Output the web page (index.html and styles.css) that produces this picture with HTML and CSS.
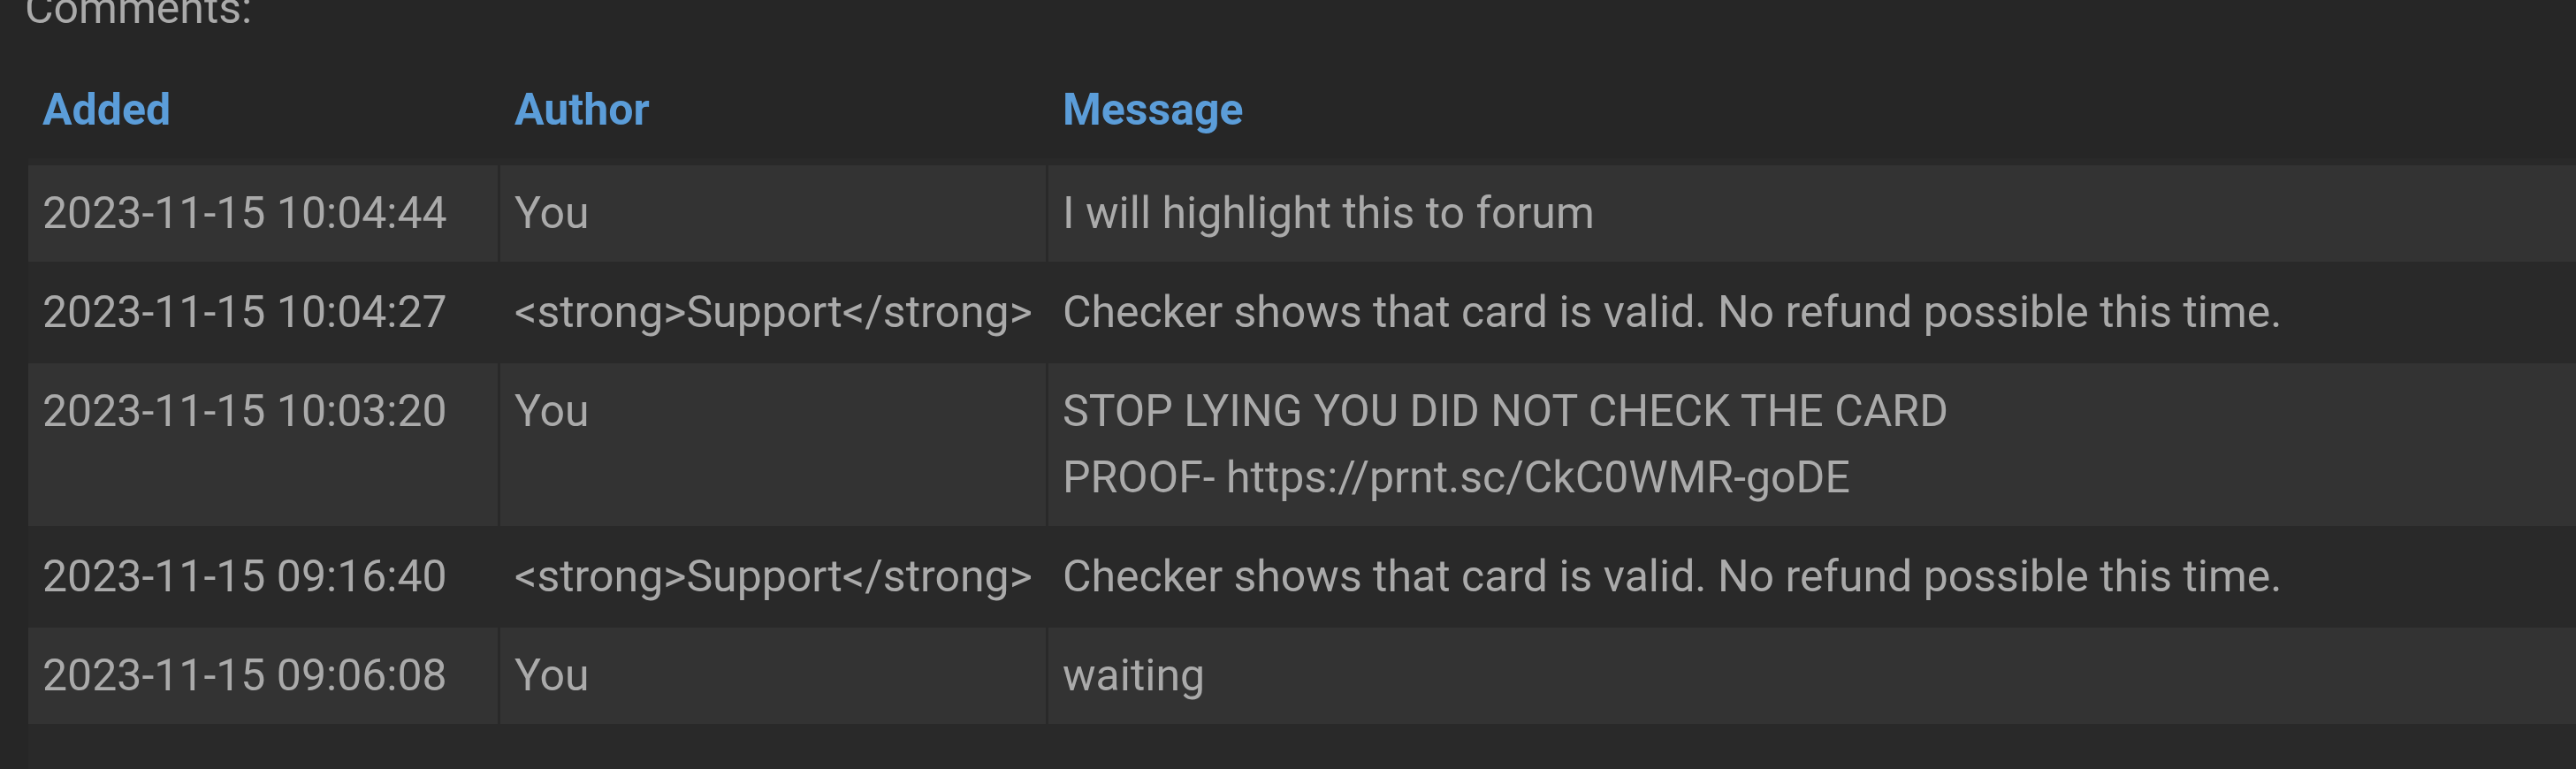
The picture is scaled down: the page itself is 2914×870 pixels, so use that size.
FILE: index.html
```html
<!DOCTYPE html>
<html>
<head>
<meta charset="utf-8">
<link rel="stylesheet" href="styles.css">
</head>
<body>
<div class="page">
  <div class="title">Comments:</div>
  <div class="comments">
    <div class="grid head">
      <div class="cell">Added</div>
      <div class="cell">Author</div>
      <div class="cell">Message</div>
    </div>
    <div class="grid body">
      <div class="row odd">
        <div class="cell">2023-11-15 10:04:44</div>
        <div class="cell">You</div>
        <div class="cell">I will highlight this to forum</div>
      </div>
      <div class="row">
        <div class="cell">2023-11-15 10:04:27</div>
        <div class="cell">&lt;strong&gt;Support&lt;/strong&gt;</div>
        <div class="cell">Checker shows that card is valid. No refund possible this time.</div>
      </div>
      <div class="row odd">
        <div class="cell">2023-11-15 10:03:20</div>
        <div class="cell">You</div>
        <div class="cell">STOP LYING YOU DID NOT CHECK THE CARD<br>PROOF- https://prnt.sc/CkC0WMR-goDE</div>
      </div>
      <div class="row">
        <div class="cell">2023-11-15 09:16:40</div>
        <div class="cell">&lt;strong&gt;Support&lt;/strong&gt;</div>
        <div class="cell">Checker shows that card is valid. No refund possible this time.</div>
      </div>
      <div class="row odd">
        <div class="cell">2023-11-15 09:06:08</div>
        <div class="cell">You</div>
        <div class="cell">waiting</div>
      </div>
    </div>
  </div>
</div>
</body>
</html>
```
FILE: styles.css
```css
html, body {
  margin: 0;
  padding: 0;
  background: #262626;
  overflow: hidden;
}
body {
  font-family: Roboto, "Liberation Sans", sans-serif;
  font-size: 50px;
  line-height: 75px;
  color: #aaaaaa;
}
.page {
  height: 870px;
  display: flex;
  flex-direction: column;
}
.title {
  margin: -28px 0 23px 28px;
}
.comments {
  flex: 1;
  margin-left: 32px;
  display: flex;
  flex-direction: column;
}
.grid {
  display: grid;
  grid-template-columns: 531px 617px 1fr;
  column-gap: 3px;
  row-gap: 3px;
  align-content: start;
}
.body {
  flex: 1;
  background: #292929;
  padding-top: 8px;
}
.row {
  display: contents;
}
.cell {
  padding: 17px 16px;
  white-space: nowrap;
}
.head .cell {
  color: #5b9dd9;
  font-weight: 700;
}
.odd .cell {
  background: #333333;
}
```
